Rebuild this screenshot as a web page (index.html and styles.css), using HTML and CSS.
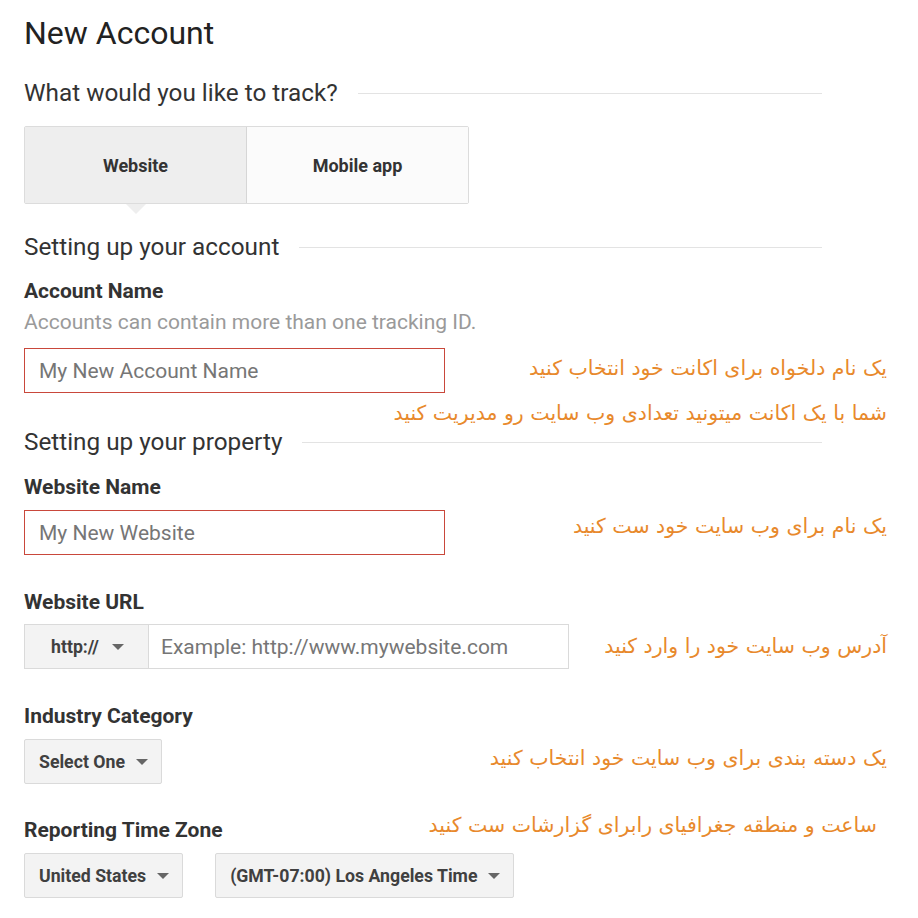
FILE: index.html
```html
<!DOCTYPE html>
<html lang="en">
<head>
<meta charset="utf-8">
<title>New Account</title>
<link rel="stylesheet" href="styles.css">
</head>
<body>
<div class="page">
  <h1 class="title">New Account</h1>

  <div class="section-head track-head"><span>What would you like to track?</span><i class="rule"></i></div>

  <div class="toggle">
    <div class="tab tab-active">Website</div>
    <div class="tab">Mobile app</div>
  </div>

  <div class="section-head account-head"><span>Setting up your account</span><i class="rule"></i></div>

  <div class="label first-label">Account Name</div>
  <div class="help">Accounts can contain more than one tracking ID.</div>
  <div class="input input-error input-account">My New Account Name</div>

  <div class="section-head property-head"><span>Setting up your property</span><i class="rule"></i></div>

  <div class="field f-name">
    <div class="label">Website Name</div>
    <div class="input input-error">My New Website</div>
  </div>

  <div class="field f-url">
    <div class="label">Website URL</div>
    <div class="url-group">
      <div class="select select-proto">http://<span class="caret"></span></div>
      <div class="url-input">Example: http://www.mywebsite.com</div>
    </div>
  </div>

  <div class="field f-industry">
    <div class="label">Industry Category</div>
    <div class="select">Select One<span class="caret"></span></div>
  </div>

  <div class="field f-zone">
    <div class="label">Reporting Time Zone</div>
    <div class="select-row">
      <div class="select">United States<span class="caret"></span></div>
      <div class="select">(GMT-07:00) Los Angeles Time<span class="caret"></span></div>
    </div>
  </div>

  <div class="note n1" dir="rtl">یک نام دلخواه برای اکانت خود انتخاب کنید</div>
  <div class="note n2" dir="rtl">شما با یک اکانت میتونید تعدادی وب سایت رو مدیریت کنید</div>
  <div class="note n3" dir="rtl">یک نام برای وب سایت خود ست کنید</div>
  <div class="note n4" dir="rtl">آدرس وب سایت خود را وارد کنید</div>
  <div class="note n5" dir="rtl">یک دسته بندی برای وب سایت خود انتخاب کنید</div>
  <div class="note n6" dir="rtl">ساعت و منطقه جغرافیای رابرای گزارشات ست کنید</div>
</div>
</body>
</html>
```

FILE: styles.css
```css
html, body {
  margin: 0;
  padding: 0;
  background: #ffffff;
}

body {
  font-family: Roboto, "Liberation Sans", Arial, sans-serif;
  color: #333;
}

.page {
  position: relative;
  padding: 0 24px;
  height: 918px;
  box-sizing: border-box;
}

.title {
  margin: 13px 0 0;
  font-size: 32px;
  line-height: 40px;
  font-weight: 400;
  color: #222;
}

.section-head {
  display: flex;
  align-items: center;
  gap: 20px;
  width: 798px;
  font-size: 24.3px;
  line-height: 30px;
  color: #333;
}

.section-head .rule {
  flex: 1;
  height: 1px;
  background: #e3e3e3;
}

.track-head { margin-top: 25px; }
.account-head { margin-top: 28px; }
.property-head { margin-top: 34px; }

.toggle {
  margin-top: 18px;
  display: flex;
  width: 445px;
  height: 78px;
  box-sizing: border-box;
  border: 1px solid #dcdcdc;
  border-radius: 2px;
  position: relative;
}

.tab {
  flex: 1;
  display: flex;
  align-items: center;
  justify-content: center;
  font-size: 18px;
  font-weight: 700;
  color: #333;
  background: #fbfbfb;
}

.tab-active {
  background: #eeeeee;
  border-right: 1px solid #d6d6d6;
  position: relative;
}

.tab-active::after {
  content: "";
  position: absolute;
  left: 50%;
  bottom: -11px;
  margin-left: -10px;
  border-left: 10px solid transparent;
  border-right: 10px solid transparent;
  border-top: 10px solid #eeeeee;
}

.label {
  font-size: 21px;
  line-height: 24px;
  font-weight: 700;
  color: #333;
}

.first-label { margin-top: 17px; }

.help {
  margin-top: 7px;
  font-size: 21px;
  line-height: 24px;
  color: #9a9a9a;
}

.input {
  box-sizing: border-box;
  width: 421px;
  height: 45px;
  display: flex;
  align-items: center;
  padding-left: 14px;
  font-size: 21px;
  color: #767676;
  border: 1px solid #ccc;
}

.input-error {
  border-color: #c9483b;
}

.input-account { margin-top: 14px; }

.field .label + * { margin-top: 11px; }
.f-url .label + * { margin-top: 10px; }

.f-name { margin-top: 18px; }
.f-url { margin-top: 35px; }
.f-industry { margin-top: 35px; }
.f-zone { margin-top: 34px; }

.url-group {
  display: flex;
  height: 45px;
}

.select {
  box-sizing: border-box;
  height: 45px;
  display: inline-flex;
  align-items: center;
  padding: 0 13px 0 14px;
  background: #f3f3f3;
  border: 1px solid #dadada;
  border-radius: 2px;
  font-size: 17.7px;
  font-weight: 700;
  color: #404040;
}

.select-proto {
  width: 125px;
  padding-left: 26px;
  border-radius: 0;
}

.caret {
  display: inline-block;
  margin-left: 11px;
  width: 0;
  height: 0;
  border-left: 6px solid transparent;
  border-right: 6px solid transparent;
  border-top: 6px solid #666;
}

.select-proto .caret { margin-left: 13px; }

.url-input {
  box-sizing: border-box;
  width: 420px;
  height: 45px;
  display: flex;
  align-items: center;
  padding-left: 12px;
  border: 1px solid #dadada;
  border-left: none;
  font-size: 21px;
  color: #767676;
}

.select-row {
  display: flex;
  gap: 32px;
}

.note {
  position: absolute;
  right: 31px;
  font-family: "DejaVu Sans", sans-serif;
  font-size: 20.5px;
  line-height: 28px;
  color: #e8892c;
  white-space: nowrap;
}

.n1 { top: 341px; }
.n2 { top: 386px; }
.n3 { top: 499px; }
.n4 { top: 619px; }
.n5 { top: 731px; }
.n6 { top: 798px; right: 41px; }
```
